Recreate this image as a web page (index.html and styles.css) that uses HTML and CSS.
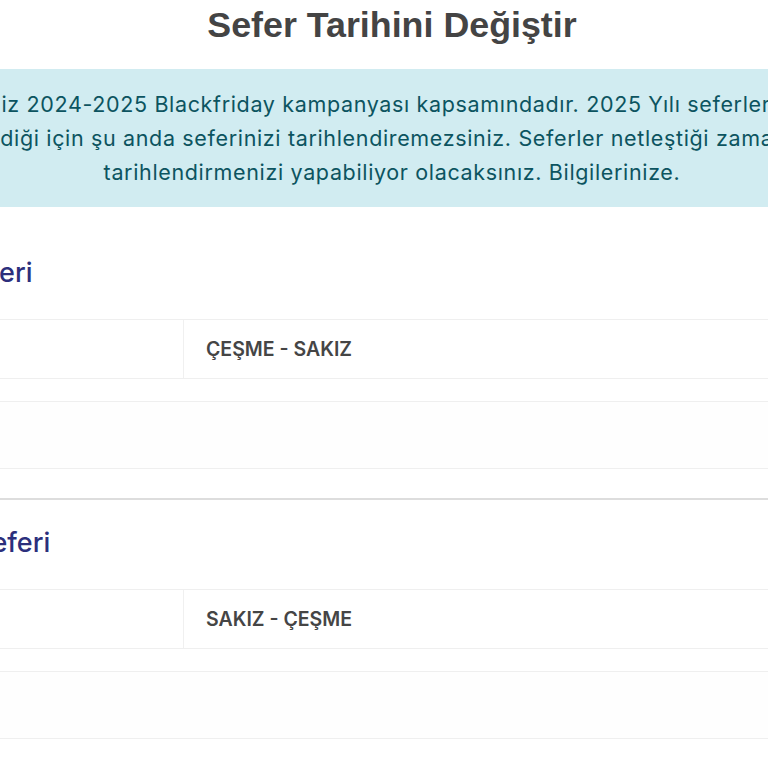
FILE: index.html
```html
<!DOCTYPE html>
<html lang="tr">
<head>
<meta charset="utf-8">
<title>Sefer Tarihini Değiştir</title>
<link rel="stylesheet" href="styles.css">
</head>
<body>
<div class="page">
  <h1 class="title">Sefer Tarihini Değiştir</h1>
  <div class="alert">
    <span class="line">Biletiniz 2024-2025 Blackfriday kampanyası kapsamındadır. 2025 Yılı seferleri henüz</span>
    <span class="line">belirlenmediği için şu anda seferinizi tarihlendiremezsiniz. Seferler netleştiği zaman biletinizin</span>
    <span class="line">tarihlendirmenizi yapabiliyor olacaksınız. Bilgilerinize.</span>
  </div>

  <section class="leg">
    <h2 class="leg-title">Gidiş Seferi</h2>
    <div class="leg-table">
      <div class="row row-main">
        <div class="cell cell-label"></div>
        <div class="cell cell-value">ÇEŞME - SAKIZ</div>
      </div>
      <div class="row row-empty"></div>
    </div>
  </section>

  <section class="leg">
    <h2 class="leg-title">Dönüş Seferi</h2>
    <div class="leg-table">
      <div class="row row-main">
        <div class="cell cell-label"></div>
        <div class="cell cell-value">SAKIZ - ÇEŞME</div>
      </div>
      <div class="row row-empty"></div>
    </div>
  </section>
</div>
</body>
</html>
```
FILE: styles.css
```css
html, body {
  margin: 0;
  padding: 0;
  background: #ffffff;
}
body {
  overflow: hidden;
  font-family: Inter, "Noto Sans", sans-serif;
}
.page {
  width: 1016px;
  margin-left: -116px;
  padding-top: 5px;
}
.title {
  margin: 0;
  font-family: "Liberation Sans", Arial, sans-serif;
  font-weight: 700;
  font-size: 35.8px;
  line-height: 40px;
  color: #444444;
  text-align: center;
}
.alert {
  margin: 24px 0 23px;
  padding: 18px 0;
  background: #d1ecf1;
  color: #0c5460;
  font-size: 21.5px;
  letter-spacing: 0.65px;
  line-height: 34px;
  text-align: center;
  display: flex;
  flex-direction: column;
  align-items: center;
  white-space: nowrap;
}
.line {
  display: block;
}
.leg {
  padding: 27px 0 29px;
  border-bottom: 2px solid #dddddd;
}
.leg-title {
  margin: 0 0 30px;
  font-size: 27px;
  line-height: 32px;
  font-weight: 500;
  color: #2c2f7c;
}
.leg-table {
  display: flex;
  flex-direction: column;
  gap: 22px;
}
.row {
  display: flex;
  align-items: stretch;
  border-top: 1px solid #efefef;
  border-bottom: 1px solid #efefef;
  box-sizing: border-box;
}
.row-main {
  height: 60px;
}
.row-empty {
  height: 68px;
  background: #fefefe;
}
.cell {
  display: flex;
  align-items: center;
}
.cell-label {
  width: 300px;
  border-right: 1px solid #f0f0f0;
  box-sizing: border-box;
}
.cell-value {
  padding-left: 22px;
  font-weight: 600;
  font-size: 19.5px;
  color: #454545;
}
```
